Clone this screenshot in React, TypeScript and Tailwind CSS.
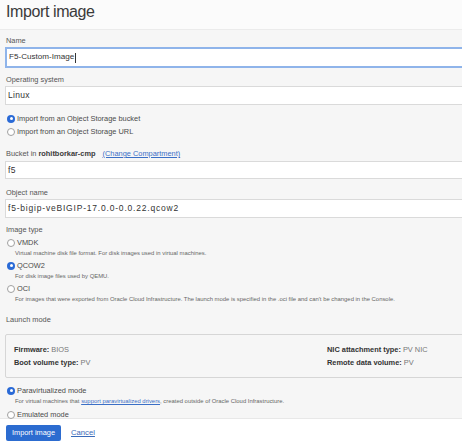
import React from 'react';

const Radio = ({ checked }: { checked?: boolean }) =>
  checked ? (
    <span className="w-[8px] h-[8px] rounded-full bg-[#2a6ad6] flex items-center justify-center shrink-0">
      <span className="w-[3px] h-[3px] rounded-full bg-white" />
    </span>
  ) : (
    <span className="w-[8px] h-[8px] rounded-full border border-[#a0a0a0] bg-white shrink-0" />
  );

const Label = ({ children, className = '' }: { children: React.ReactNode; className?: string }) => (
  <div className={`h-[12px] leading-[12px] text-[7.4px] text-[#555] pl-[1px] ${className}`}>{children}</div>
);

const Input = ({
  value,
  focused,
  h,
  text = 'text-[8.3px]',
}: {
  value: string;
  focused?: boolean;
  h: string;
  text?: string;
}) => (
  <div
    className={`${h} ${text} w-[480px] bg-white flex items-center text-[#333] pl-[2px] ${
      focused ? 'border-2 border-[#8fb4ea]' : 'border border-[#dadada]'
    }`}
  >
    {value}
    {focused && <span className="w-px h-[10px] bg-[#333] ml-px" />}
  </div>
);

const Option = ({ checked, label, className = '' }: { checked?: boolean; label: string; className?: string }) => (
  <div className={`h-[13px] flex items-center gap-[2px] pl-[2px] text-[7.4px] text-[#4a4a4a] ${className}`}>
    <Radio checked={checked} />
    <span>{label}</span>
  </div>
);

const Desc = ({ children, className = '' }: { children: React.ReactNode; className?: string }) => (
  <div className={`h-[8px] leading-[8px] text-[5.9px] text-[#666] pl-[10px] ${className}`}>{children}</div>
);

export default function App() {
  return (
    <div
      className="w-[462px] h-[446px] overflow-hidden bg-[#f6f6f6]"
      style={{ fontFamily: '"Liberation Sans", Arial, sans-serif' }}
    >
      {/* header */}
      <div className="h-[30px] bg-[#fbfbfb] border-b border-[#ebebeb] flex items-center pl-[6px] pb-[6px]">
        <h1 className="text-[16px] tracking-[-0.4px] text-[#3a3a3a]">Import image</h1>
      </div>

      {/* form */}
      <div className="pl-[5px] pt-[5px] h-[388px]">
        <Label>Name</Label>
        <Input h="h-[21px]" value="F5-Custom-Image" focused text="text-[8.1px]" />

        <Label className="mt-[6px]">Operating system</Label>
        <Input h="h-[19px]" value="Linux" text="text-[8.5px] tracking-[0.3px]" />

        <div className="mt-[7px]">
          <Option checked label="Import from an Object Storage bucket" />
          <Option label="Import from an Object Storage URL" />
        </div>

        <Label className="mt-[10px]">
          Bucket in <b className="text-[#3a3a3a]">rohitborkar-cmp</b>
          <span className="ml-[7px] text-[#3b6fc6] underline">(Change Compartment)</span>
        </Label>
        <div className="mt-[1px]">
          <Input h="h-[18px]" value="f5" text="text-[8.5px] tracking-[0.4px]" />
        </div>

        <Label className="mt-[8px]">Object name</Label>
        <Input
          h="h-[19px]"
          value="f5-bigip-veBIGIP-17.0.0-0.0.22.qcow2"
          text="text-[8.5px] tracking-[0.8px]"
        />

        <Label className="mt-[6px]">Image type</Label>
        <Option className="h-[12px]" label="VMDK" />
        <Desc>Virtual machine disk file format. For disk images used in virtual machines.</Desc>
        <Option className="h-[12px] mt-[2px]" checked label="QCOW2" />
        <Desc>For disk image files used by QEMU.</Desc>
        <Option className="h-[12px] mt-[2px]" label="OCI" />
        <Desc>
          For images that were exported from Oracle Cloud Infrastructure. The launch mode is specified in the .oci file
          and can't be changed in the Console.
        </Desc>

        <Label className="mt-[11px]">Launch mode</Label>
        <div className="mt-[8px] w-[480px] h-[44px] border border-[#d6d6d6] rounded-[2px] py-[8px] pl-[8px] text-[7.4px] text-[#777] flex">
          <div className="w-[313px]">
            <div className="h-[13px] flex items-center">
              <b className="text-[#333] mr-[2px]">Firmware:</b>BIOS
            </div>
            <div className="h-[13px] flex items-center">
              <b className="text-[#333] mr-[2px]">Boot volume type:</b>PV
            </div>
          </div>
          <div>
            <div className="h-[13px] flex items-center">
              <b className="text-[#333] mr-[2px]">NIC attachment type:</b>PV NIC
            </div>
            <div className="h-[13px] flex items-center">
              <b className="text-[#333] mr-[2px]">Remote data volume:</b>PV
            </div>
          </div>
        </div>

        <Option className="mt-[6px] h-[12px]" checked label="Paravirtualized mode" />
        <div className="h-[9px] leading-[9px] text-[5.9px] text-[#666] pl-[10px]">
          For virtual machines that{' '}
          <span className="text-[#3b6fc6] underline">support paravirtualized drivers</span>, created outside of Oracle
          Cloud Infrastructure.
        </div>
        <Option className="mt-[2px] h-[12px]" label="Emulated mode" />
      </div>

      {/* footer */}
      <div className="h-[28px] bg-white border-t border-[#e8e8e8] flex items-start pt-[6px] pl-[6px] gap-[10px]">
        <button className="h-[16px] w-[55px] bg-[#2c6cd0] rounded-[2px] text-white text-[7.4px]">Import image</button>
        <span className="h-[16px] flex items-center text-[7.7px] text-[#3a6ab8] underline">Cancel</span>
      </div>
    </div>
  );
}
